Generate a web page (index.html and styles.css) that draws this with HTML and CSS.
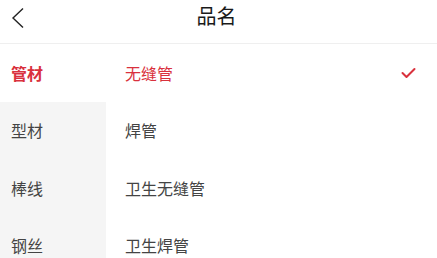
FILE: index.html
```html
<!DOCTYPE html>
<html lang="zh">
<head>
<meta charset="utf-8">
<link rel="stylesheet" href="styles.css">
</head>
<body>
<div class="page">
  <header class="nav">
    <span class="back">
      <svg width="14" height="22" viewBox="0 0 14 22"><polyline points="12,1.5 2,11 12,20.5" fill="none" stroke="#222" stroke-width="1.4" stroke-linejoin="miter"/></svg>
    </span>
    <h1 class="title">品名</h1>
  </header>
  <div class="body">
    <ul class="cats">
      <li class="cat active">管材</li>
      <li class="cat">型材</li>
      <li class="cat">棒线</li>
      <li class="cat">钢丝</li>
    </ul>
    <ul class="items">
      <li class="item active"><span>无缝管</span>
        <svg class="check" width="15" height="12" viewBox="0 0 15 12"><polyline points="1.5,6 5.5,10 13.5,2" fill="none" stroke="#d9313d" stroke-width="2" stroke-linecap="round" stroke-linejoin="round"/></svg>
      </li>
      <li class="item"><span>焊管</span></li>
      <li class="item"><span>卫生无缝管</span></li>
      <li class="item"><span>卫生焊管</span></li>
    </ul>
  </div>
</div>
</body>
</html>
```

FILE: styles.css
```css
* { box-sizing: border-box; }
html, body { margin: 0; padding: 0; background: #fff; }
body { font-family: "Noto Sans CJK SC", "Noto Sans", sans-serif; color: #333; }
.page { width: 437px; height: 258px; overflow: hidden; }
.nav {
  height: 44px;
  border-bottom: 1px solid #efefef;
  display: flex;
  align-items: center;
  justify-content: center;
  position: relative;
}
.back { position: absolute; left: 11px; top: 7px; width: 14px; height: 22px; display: flex; }
.title { margin: 0 4px 0 0; font-size: 20px; font-weight: 400; color: #1a1a1a; line-height: 1; padding-bottom: 11px; }
.body { display: flex; }
ul { list-style: none; margin: 0; padding: 0; }
.cats { width: 106px; background: #f5f5f5; }
.cat {
  height: 57.5px;
  display: flex;
  align-items: center;
  padding-left: 11px;
  font-size: 16px;
  color: #444;
}
.cat.active { background: #fff; color: #d9313d; font-weight: 700; }
.items { flex: 1; }
.item {
  height: 57.5px;
  display: flex;
  align-items: center;
  justify-content: space-between;
  padding-left: 19px;
  padding-right: 21px;
  font-size: 16px;
  color: #444;
}
.item.active { color: #d9313d; }
.check { display: block; }
```
